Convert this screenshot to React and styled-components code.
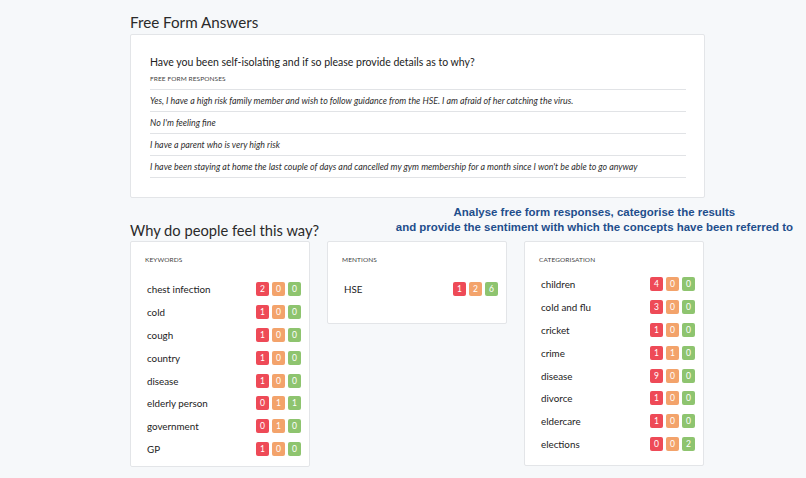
import React from 'react';
import styled, { createGlobalStyle } from 'styled-components';

const GlobalStyle = createGlobalStyle`
  html, body {
    margin: 0;
    padding: 0;
    background: #f6f8fa;
  }
  body {
    font-family: Lato, "Open Sans", sans-serif;
    color: #333;
  }
`;

const responses = [
  'Yes, I have a high risk family member and wish to follow guidance from the HSE. I am afraid of her catching the virus.',
  "No I'm feeling fine",
  'I have a parent who is very high risk',
  "I have been staying at home the last couple of days and cancelled my gym membership for a month since I won't be able to go anyway",
];

const keywords = [
  ['chest infection', 2, 0, 0],
  ['cold', 1, 0, 0],
  ['cough', 1, 0, 0],
  ['country', 1, 0, 0],
  ['disease', 1, 0, 0],
  ['elderly person', 0, 1, 1],
  ['government', 0, 1, 0],
  ['GP', 1, 0, 0],
];

const mentions = [['HSE', 1, 2, 6]];

const categories = [
  ['children', 4, 0, 0],
  ['cold and flu', 3, 0, 0],
  ['cricket', 1, 0, 0],
  ['crime', 1, 1, 0],
  ['disease', 9, 0, 0],
  ['divorce', 1, 0, 0],
  ['eldercare', 1, 0, 0],
  ['elections', 0, 0, 2],
];

const Page = styled.div`
  width: 575px;
  padding: 11px 0 0 130px;
`;

const Title = styled.h2`
  margin: 0;
  font-size: ${(p) => p.size || 15.2}px;
  font-weight: 400;
  color: #2a2a2a;
  line-height: 22px;
`;

const Card = styled.div`
  background: #fff;
  border: 1px solid #e3e5e8;
  border-radius: 2px;
  box-sizing: border-box;
`;

const AnswersCard = styled(Card)`
  margin-top: 1px;
  padding: 19px 18px 19px 19px;
`;

const Question = styled.div`
  font-size: 10.5px;
  color: #222;
  line-height: 16px;
`;

const Label = styled.div`
  font-size: 6.5px;
  text-transform: uppercase;
  color: #444;
  letter-spacing: 0.1px;
  line-height: 10px;
  margin-top: ${(p) => p.top || 0}px;
`;

const ResponseList = styled.div`
  margin-top: 5px;
  border-top: 1px solid #e1e3e6;
`;

const Response = styled.div`
  font-style: italic;
  font-size: 8.85px;
  color: #2e2e2e;
  height: 21px;
  line-height: 21px;
  border-bottom: 1px solid #e1e3e6;
  white-space: nowrap;
`;

const HeaderRow = styled.div`
  display: flex;
  justify-content: space-between;
  align-items: flex-end;
  margin-top: 7px;
  margin-right: -88px;
`;

const Annotation = styled.div`
  font-family: "Liberation Sans", Arial, sans-serif;
  font-weight: 700;
  font-size: 11.45px;
  line-height: 15px;
  color: #1f4e8c;
  text-align: center;
  margin-bottom: 6px;
`;

const Grid = styled.div`
  display: grid;
  grid-template-columns: repeat(3, 180px);
  column-gap: 17px;
  align-items: start;
`;

const ListCard = styled(Card)`
  padding: 13px 8px 6px 14px;
`;

const Row = styled.div`
  display: flex;
  align-items: center;
  justify-content: space-between;
  height: 22.8px;
  padding-left: 2px;
  font-size: 9.8px;
  color: #222;
`;

const Rows = styled.div`
  margin-top: ${(p) => p.top}px;
  padding-bottom: ${(p) => p.bottom || 0}px;
`;

const Badges = styled.div`
  display: flex;
  gap: 3px;
`;

const Badge = styled.span`
  width: 13px;
  height: 14px;
  border-radius: 2px;
  background: ${(p) => p.bg};
  color: #fff;
  font-size: 8.5px;
  display: flex;
  align-items: center;
  justify-content: center;
`;

const SentimentBadges = ({ neg, mid, pos }) => (
  <Badges>
    <Badge bg="#ee4a57">{neg}</Badge>
    <Badge bg="#f3a36b">{mid}</Badge>
    <Badge bg="#8ec46f">{pos}</Badge>
  </Badges>
);

const TermCard = ({ label, items, top, bottom }) => (
  <ListCard>
    <Label>{label}</Label>
    <Rows top={top} bottom={bottom}>
      {items.map(([name, a, b, c]) => (
        <Row key={name}>
          <span>{name}</span>
          <SentimentBadges neg={a} mid={b} pos={c} />
        </Row>
      ))}
    </Rows>
  </ListCard>
);

export default function App() {
  return (
    <>
      <GlobalStyle />
      <Page>
        <Title>Free Form Answers</Title>
        <AnswersCard>
          <Question>Have you been self-isolating and if so please provide details as to why?</Question>
          <Label top={4}>Free form responses</Label>
          <ResponseList>
            {responses.map((r) => (
              <Response key={r}>{r}</Response>
            ))}
          </ResponseList>
        </AnswersCard>

        <HeaderRow>
          <Title size={14.7}>Why do people feel this way?</Title>
          <Annotation>
            Analyse free form responses, categorise the results
            <br />
            and provide the sentiment with which the concepts have been referred to
          </Annotation>
        </HeaderRow>

        <Grid>
          <TermCard label="Keywords" items={keywords} top={13} />
          <TermCard label="Mentions" items={mentions} top={13} bottom={16} />
          <TermCard label="Categorisation" items={categories} top={8} bottom={4} />
        </Grid>
      </Page>
    </>
  );
}
